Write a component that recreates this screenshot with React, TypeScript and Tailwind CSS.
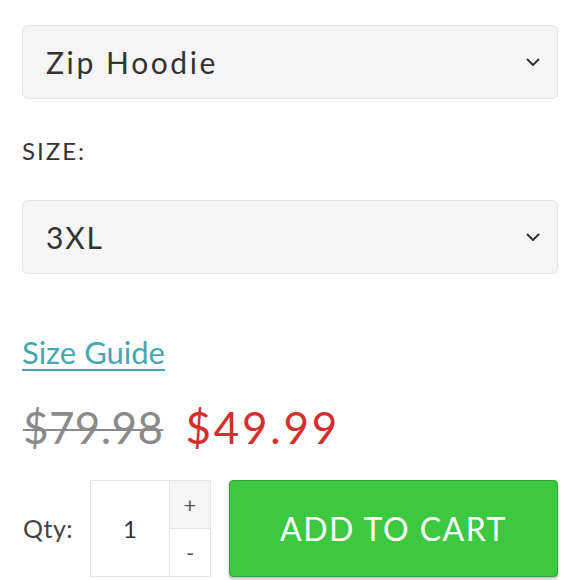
import React, { useState } from 'react';

const Chevron = () => (
    <svg width="14" height="9" viewBox="0 0 14 9" fill="none" className="shrink-0">
        <path d="M1.5 1.5L7 7L12.5 1.5" stroke="#333" strokeWidth="2" strokeLinecap="round" strokeLinejoin="round" />
    </svg>
);

interface SelectBoxProps {
    value: string;
    wide?: boolean;
}

const SelectBox: React.FC<SelectBoxProps> = ({ value, wide }) => {
    return (
        <div className="flex h-[74px] items-center justify-between rounded-[6px] border border-[#e4e4e4] bg-[#f5f5f5] pl-[23px] pr-[17px]">
            <span className={wide ? "text-[30px] tracking-[2.6px] text-[#333]" : "text-[30px] tracking-[1.8px] text-[#333]"}>{value}</span>
            <Chevron />
        </div>
    );
};

const App: React.FC = () => {
    const [qty, setQty] = useState(1);

    return (
        <div className="min-h-[580px] w-[580px] overflow-hidden bg-white px-[22px] pt-[25px] font-['Lato','Noto_Sans',sans-serif] text-[#333]">
            <SelectBox value="Zip Hoodie" wide />

            <div className="mt-[37px] h-[30px] text-[24px] leading-[30px] tracking-[2px]">SIZE:</div>

            <div className="mt-[34px]">
                <SelectBox value="3XL" />
            </div>

            <div className="mt-[62px] h-[32px] leading-[32px]">
                <a href="#" className="text-[31px] text-[#45a8b0] underline decoration-[2px] underline-offset-[5px]">
                    Size Guide
                </a>
            </div>

            {/* old price struck through, sale price in red */}
            <div className="mt-[31px] flex h-[56px] items-center gap-[22px] pl-[1px] leading-[56px]">
                <span className="text-[44px] tracking-[0.4px] text-[#8a8a8a] line-through decoration-[2px]">$79.98</span>
                <span className="text-[44px] tracking-[2.8px] text-[#d32f2f]">$49.99</span>
            </div>

            <div className="mt-[25px] flex items-center">
                <span className="w-[68px] pl-[1px] text-[25px] tracking-[0.5px] text-[#444]">Qty:</span>
                <div className="flex h-[97px] w-[121px] border border-[#e5e5e5]">
                    <div className="flex flex-1 items-center justify-center text-[24px] text-[#333]">{qty}</div>
                    <div className="flex w-[41px] flex-col border-l border-[#e5e5e5]">
                        <button
                            onClick={() => setQty(qty + 1)}
                            className="flex flex-1 items-center justify-center bg-[#f5f5f5] text-[22px] text-[#555]"
                        >
                            +
                        </button>
                        <button
                            onClick={() => setQty(Math.max(1, qty - 1))}
                            className="flex flex-1 items-center justify-center border-t border-[#e5e5e5] bg-white text-[22px] text-[#555]"
                        >
                            -
                        </button>
                    </div>
                </div>
                <button className="ml-[18px] flex h-[97px] flex-1 items-center justify-center rounded-[4px] border border-[#30a534] bg-[#3cc93f] text-[32px] tracking-[1.5px] text-white shadow-[0_2px_3px_rgba(0,0,0,0.25)]">
                    ADD TO CART
                </button>
            </div>
        </div>
    );
};

export default App;
